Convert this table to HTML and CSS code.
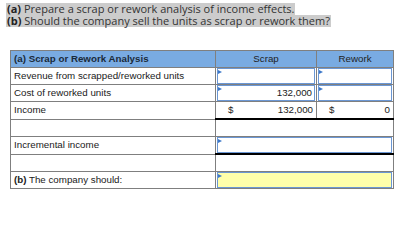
FILE: index.html
```html
<!DOCTYPE html>
<html>
<head>
<meta charset="utf-8">
<link rel="stylesheet" href="styles.css">
</head>
<body>
<div class="prompt">
  <div class="line"><b>(a)</b> Prepare a scrap or rework analysis of income effects.</div>
  <div class="line"><b>(b)</b> Should the company sell the units as scrap or rework them?</div>
</div>
<table class="sheet">
  <colgroup><col class="c1"><col class="c2"><col class="c3"></colgroup>
  <tr class="head">
    <td class="label">(a) Scrap or Rework Analysis</td>
    <td class="center">Scrap</td>
    <td class="center">Rework</td>
  </tr>
  <tr>
    <td class="label">Revenue from scrapped/reworked units</td>
    <td class="inp"><div class="box"></div></td>
    <td class="inp"><div class="box"></div></td>
  </tr>
  <tr>
    <td class="label">Cost of reworked units</td>
    <td class="inp"><div class="box num">132,000</div></td>
    <td class="inp"><div class="box"></div></td>
  </tr>
  <tr>
    <td class="label">Income</td>
    <td class="total"><div class="money"><span>$</span><span>132,000</span></div></td>
    <td class="total"><div class="money"><span>$</span><span>0</span></div></td>
  </tr>
  <tr class="blank">
    <td class="label"></td>
    <td colspan="2" class="open"></td>
  </tr>
  <tr>
    <td class="label">Incremental income</td>
    <td colspan="2" class="inp totalwide"><div class="box"></div></td>
  </tr>
  <tr class="blank">
    <td class="label"></td>
    <td colspan="2" class="open"></td>
  </tr>
  <tr>
    <td class="label"><b>(b)</b> The company should:</td>
    <td colspan="2" class="inp"><div class="box yellow"></div></td>
  </tr>
</table>
</body>
</html>
```

FILE: styles.css
```css
html, body {
  margin: 0;
  padding: 0;
  background: #ffffff;
}
.prompt {
  padding: 3px 0 0 6px;
  font-family: "Open Sans", Lato, sans-serif;
  font-size: 11px;
  color: #333333;
}
.line {
  width: fit-content;
  height: 12px;
  line-height: 12px;
  padding: 0 1px;
  background: #cccccc;
  white-space: nowrap;
}
.line b {
  font-weight: 700;
  color: #222;
}
.sheet {
  margin: 23px 0 0 10px;
  border-collapse: collapse;
  table-layout: fixed;
  width: 383px;
  font-family: "Liberation Sans", Arial, sans-serif;
  font-size: 9.75px;
  color: #1a1a1a;
}
.c1 { width: 205px; }
.c2 { width: 101px; }
.c3 { width: 77px; }
.sheet td {
  border: 1px solid #7f7f7f;
  height: 16px;
  padding: 0 3px;
  line-height: 16px;
  white-space: nowrap;
  overflow: hidden;
}
.head td {
  background: #79abe2;
  font-weight: 700;
  color: #1a2a3a;
}
.head td.center {
  font-weight: 400;
  color: #222;
}
.center { text-align: center; }
.sheet td.inp {
  padding: 0 1px;
}
.box {
  position: relative;
  box-sizing: border-box;
  height: 16px;
  border: 1px solid #6b97d4;
  background: #ffffff;
  line-height: 14px;
  padding: 0 2px;
}
.box::before {
  content: "";
  position: absolute;
  left: 0;
  top: 1px;
  border-left: 4px solid #3d78c9;
  border-top: 2px solid transparent;
  border-bottom: 2px solid transparent;
}
.box.num { text-align: right; }
.box.yellow { background: #ffffaa; }
.sheet td.total {
  border-bottom: 2px solid #000000;
  border-top: 1px solid #000000;
  padding: 0 3px 0 12px;
}
.money {
  display: flex;
  justify-content: space-between;
}
.sheet td.totalwide {
  border-bottom: 2px solid #000000;
}
.sheet td.open {
  border-top: none;
  border-bottom: none;
}
.blank td.label {
  border-top: none;
}
```
